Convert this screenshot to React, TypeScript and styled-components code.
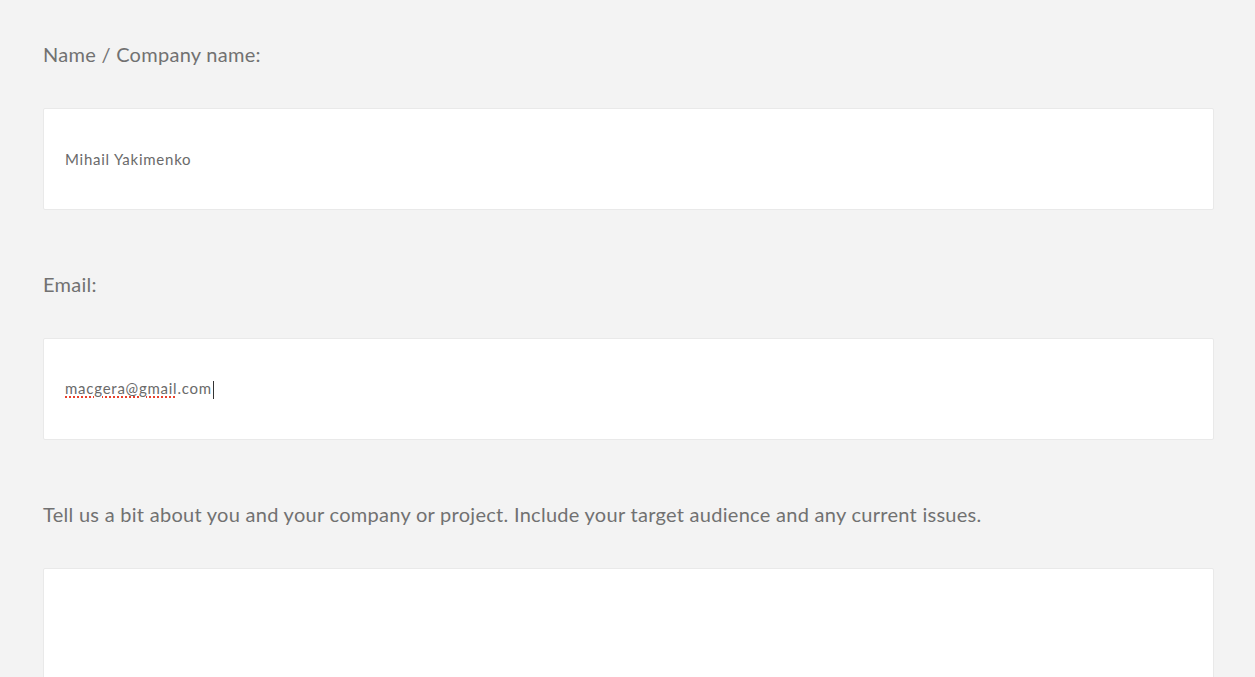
import React from "react";
import styled, { createGlobalStyle } from "styled-components";

const Global = createGlobalStyle`
  html, body { margin: 0; padding: 0; background: #f3f3f3; }
  body { font-family: Lato, "Open Sans", sans-serif; }
`;

const Page = styled.div`
  padding: 42px 41px 0 43px;
  display: flex;
  flex-direction: column;
`;

const Field = styled.div`
  display: flex;
  flex-direction: column;
  gap: 42px;
  margin-bottom: 62px;
`;

const Label = styled.div`
  font-size: 20px;
  line-height: 24px;
  letter-spacing: 0.28px;
  color: #717171;
  white-space: nowrap;
`;

const Box = styled.div<{ $tall?: boolean }>`
  box-sizing: border-box;
  height: ${(p) => (p.$tall ? "200px" : "102px")};
  background: #fff;
  border: 1px solid #e9e9e9;
  border-radius: 2px;
  padding: 0 21px;
  display: flex;
  align-items: center;
  font-size: 15px;
  letter-spacing: 0.75px;
  color: #6a6a6a;
`;

const Misspelled = styled.span`
  text-decoration-line: underline;
  text-decoration-style: dotted;
  text-decoration-color: #e8412c;
  text-decoration-thickness: 2px;
  text-underline-offset: 3px;
`;

const Caret = styled.span`
  display: inline-block;
  width: 1px;
  height: 18px;
  background: #333;
  margin-left: 1px;
  vertical-align: middle;
`;

export default function App() {
  return (
    <>
      <Global />
      <Page>
        <Field>
          <Label>Name / Company name:</Label>
          <Box>Mihail Yakimenko</Box>
        </Field>
        <Field>
          <Label>Email:</Label>
          <Box>
            <span>
              <Misspelled>macgera@gmail</Misspelled>.com
              <Caret />
            </span>
          </Box>
        </Field>
        <Field>
          <Label>
            Tell us a bit about you and your company or project. Include your target audience and any current issues.
          </Label>
          <Box $tall />
        </Field>
      </Page>
    </>
  );
}
